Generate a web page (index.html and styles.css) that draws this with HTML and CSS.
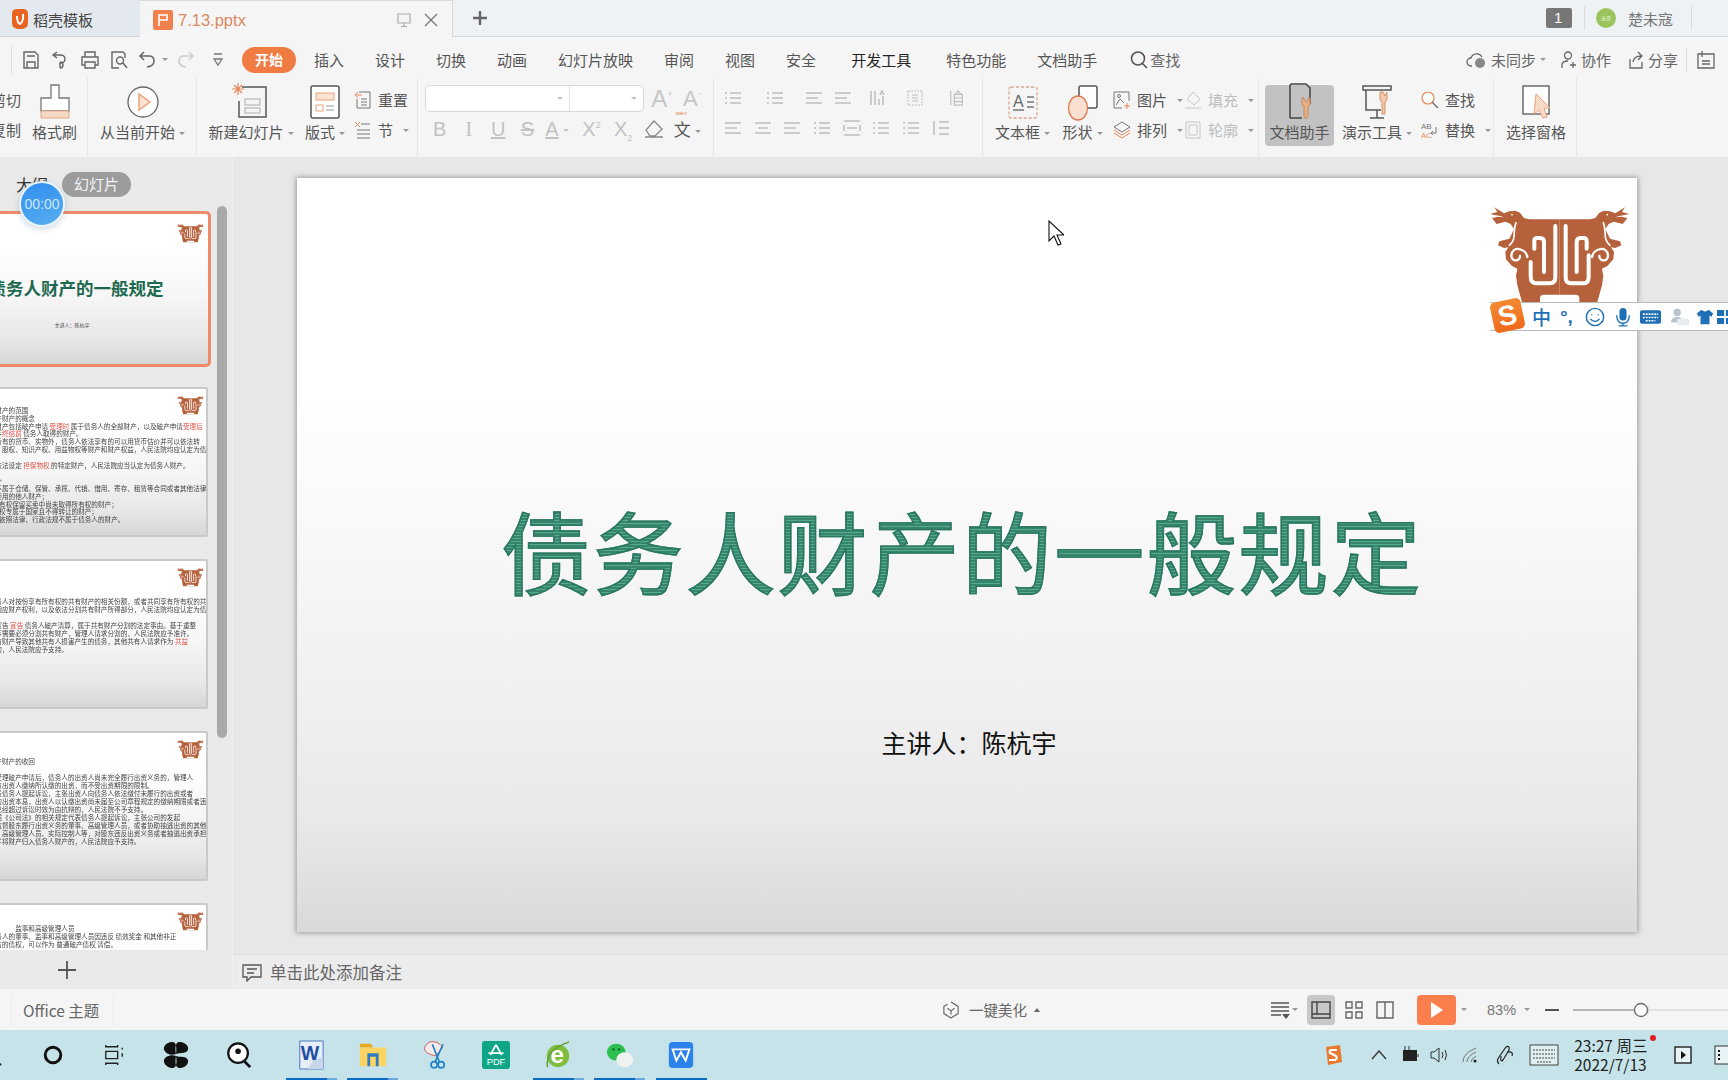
FILE: index.html
```html
<!DOCTYPE html>
<html lang="zh">
<head>
<meta charset="utf-8">
<title>7.13.pptx</title>
<link rel="stylesheet" href="styles.css">
</head>
<body>
<svg class="defs" width="0" height="0">
  <defs>
    <g id="logo">
      <g id="half">
        <path fill="#b5623c" d="M359 92H268L252 88 240 72 226 66 208 68 192 74 163 56 172 70 150 76 180 82 192 86 172 84 156 89 170 106 197 99 212 106 222 122 208 150 178 158 174 170 192 178 205 176 196 190 198 212 216 232 232 240 228 262 232 290 246 340H359Z"/>
        <path fill="none" stroke="#fff" stroke-width="5" stroke-linecap="round" d="M228 102C216 130 232 150 208 170"/>
        <circle cx="216" cy="78" r="2.500" fill="#fff"/>
      </g>
      <use href="#half" transform="matrix(-1 0 0 1 718 0)"/>
      <g fill="none" stroke="#fff" stroke-width="12" stroke-linecap="round" stroke-linejoin="round">
        <path d="M283 180V156Q283 148 292 148H300Q312 148 312 160V250M272 220V264Q272 284 292 284H330Q346 284 346 266V112"/>
        <path d="M377 112V266Q377 284 393 284H430Q446 284 446 264V200M410 250V160Q410 148 422 148H430Q440 148 440 158V180"/>
        <path stroke-width="7" d="M262 205C258 178 216 170 214 200 214 220 240 220 240 202"/>
        <path stroke-width="7" d="M456 205C460 178 502 170 504 200 504 220 478 220 478 202"/>
      </g>
      <path fill="#fff" d="M300 340V328Q300 318 312 318H406Q418 318 418 328V340Z"/>
    </g>
    <g id="para" fill="none" stroke="#bdbdbd" stroke-width="1.5">
      <path d="M1 3H17M1 8H13M1 13H17"/>
    </g>
    <g id="paraC" fill="none" stroke="#bdbdbd" stroke-width="1.5">
      <path d="M1 3H17M4 8H14M1 13H17"/>
    </g>
    <g id="bul" fill="none" stroke="#bdbdbd" stroke-width="1.5">
      <path d="M6 3H17M6 8H17M6 13H17M1 3H3M1 8H3M1 13H3"/>
    </g>
  </defs>
</svg>

<header class="titlebar">
  <div class="tab tab-home">
    <svg class="tab-ic" viewBox="0 0 16 20"><path fill="#e8641f" d="M0 5Q0 0 5 0H11Q16 0 16 5V14Q16 20 8 20 0 20 0 14Z"/><path fill="none" stroke="#fff" stroke-width="2" d="M5 7Q5 14 8 15 12 12 11 5"/></svg>
    <span>稻壳模板</span>
  </div>
  <div class="tab tab-doc">
    <svg class="tab-ic2" viewBox="0 0 20 20"><rect width="20" height="20" rx="2" fill="#f0814e"/><path fill="none" stroke="#fff" stroke-width="1.6" d="M6 16V5H14V10H6"/></svg>
    <span class="doc-name">7.13.pptx</span>
    <svg class="tab-mon" viewBox="0 0 16 16"><path fill="none" stroke="#aaa" stroke-width="1.2" d="M2 2H14V11H2ZM8 11V14M5 14.500H11"/></svg>
    <svg class="tab-x" viewBox="0 0 14 14"><path stroke="#777" stroke-width="1.3" d="M1 1L13 13M13 1L1 13"/></svg>
  </div>
  <svg class="tab-plus" viewBox="0 0 16 16"><path stroke="#666" stroke-width="2.400" d="M8 1V15M1 8H15"/></svg>
  <div class="title-right">
    <span class="count">1</span>
    <i class="vsep"></i>
    <span class="avatar">未登</span>
    <span class="uname">楚未寇</span>
    <i class="vsep"></i>
  </div>
</header>

<nav class="menubar">
  <i class="qa-line"></i>
  <svg class="qa q1" viewBox="0 0 18 18"><path fill="none" stroke="#666" stroke-width="1.400" d="M2 1H13L16 4V17H2ZM5 17V11H13V17M5 5H13"/></svg>
  <svg class="qa q2" viewBox="0 0 18 18"><path fill="none" stroke="#666" stroke-width="1.400" d="M2 4H9Q14 4 14 8T9 12V17M6 1L2 4 6 7M9 17A3 3 0 1 0 9 11"/></svg>
  <svg class="qa q3" viewBox="0 0 18 18"><path fill="none" stroke="#666" stroke-width="1.400" d="M4 6V1H14V6M4 14H1V6H17V14H14M4 11H14V17H4Z"/></svg>
  <svg class="qa q2" viewBox="0 0 18 18"><path fill="none" stroke="#666" stroke-width="1.400" d="M9 17H2V1H13L15 3V7M10 13A3.500 3.500 0 1 0 10 6 3.500 3.500 0 0 0 10 13M13 12L17 17"/></svg>
  <svg class="qa q4" viewBox="0 0 18 18"><path fill="none" stroke="#666" stroke-width="1.500" d="M6 1L2 5 6 9M2 5H11Q16 5 16 10T9 16"/></svg>
  <i class="ar ar-q"></i>
  <svg class="qa q5" viewBox="0 0 18 18"><path fill="none" stroke="#ccc" stroke-width="1.500" d="M12 1L16 5 12 9M16 5H7Q2 5 2 10T9 16"/></svg>
  <svg class="qa q6" viewBox="0 0 18 18"><path fill="none" stroke="#777" stroke-width="1.300" d="M5 3H13M5 8H13L9 14Z"/></svg>
  <span class="pill">开始</span>
  <ul class="nav">
    <li>插入</li><li>设计</li><li>切换</li><li>动画</li><li>幻灯片放映</li><li>审阅</li><li>视图</li><li>安全</li>
    <li class="dark">开发工具</li><li class="far">特色功能</li><li>文档助手</li>
  </ul>
  <svg class="nav-search" viewBox="0 0 18 18"><path fill="none" stroke="#555" stroke-width="1.600" d="M8 14A6.500 6.500 0 1 0 8 1 6.500 6.500 0 0 0 8 14M12 12L17 17"/></svg>
  <span class="nav-find">查找</span>
  <div class="menu-right">
    <svg class="mr-ic" viewBox="0 0 22 18"><path fill="none" stroke="#666" stroke-width="1.300" d="M6 15H5A4 4 0 0 1 5 7 6 6 0 0 1 16 6"/><circle cx="14" cy="12" r="5" fill="#888"/></svg>
    <span class="mr-t">未同步</span><i class="ar"></i>
    <svg class="mr-i2" viewBox="0 0 18 18"><path fill="none" stroke="#666" stroke-width="1.300" d="M8 8A3.500 3.500 0 1 0 8 1 3.500 3.500 0 0 0 8 8M2 17V14Q2 10 8 10M13 11V17M10 14H16"/></svg>
    <span class="mr-t">协作</span>
    <svg class="mr-i3" viewBox="0 0 18 18"><path fill="none" stroke="#666" stroke-width="1.300" d="M3 8V17H15V11M6 11Q7 5 14 5M11 1L15 5 11 9"/></svg>
    <span class="mr-t">分享</span>
    <i class="vsep mr-sep"></i>
    <svg class="mr-i4" viewBox="0 0 18 20"><path fill="none" stroke="#666" stroke-width="1.300" d="M1 4H17V18H1ZM5 1V7M5 11H13M5 14H13"/></svg>
  </div>
</nav>

<section class="ribbon">
  <div class="grp g1">
    <div class="stack cutoff"><span class="lbl">剪切</span><span class="lbl">复制</span></div>
    <div class="big fmt">
      <svg class="big-ic" viewBox="0 0 44 44"><path fill="#fff" stroke="#777" stroke-width="1.300" d="M18 5H26V18H36V31H8V18H18Z"/><path fill="#f6d8c3" stroke="#dba98a" d="M8 31H36V38H8Z"/></svg>
      <span class="lbl">格式刷</span>
    </div>
  </div>
  <div class="grp g2">
    <div class="big">
      <svg class="big-ic" viewBox="0 0 44 44"><circle cx="22" cy="22" r="15" fill="#fff" stroke="#666" stroke-width="1.300"/><path fill="#fbe3d3" stroke="#e9a27d" stroke-width="1.500" d="M18 14L29 22 18 30Z"/></svg>
      <span class="lbl">从当前开始<i class="ar"></i></span>
    </div>
  </div>
  <div class="grp g3">
    <div class="big new">
      <svg class="big-ic" viewBox="0 0 44 44"><path fill="none" stroke="#555" stroke-width="1.500" d="M13 7H37V37H10V21"/><rect x="16" y="19" width="15" height="6" fill="none" stroke="#aaa"/><rect x="16" y="28" width="15" height="5" fill="none" stroke="#aaa"/><path stroke="#e7875a" stroke-width="1.200" d="M5 5L13 13M13 5L5 13M9 3V15M3 9H15"/></svg>
      <span class="lbl">新建幻灯片<i class="ar"></i></span>
    </div>
    <div class="big lay">
      <svg class="big-ic" viewBox="0 0 44 44"><rect x="8" y="6" width="28" height="32" rx="2" fill="#fff" stroke="#555" stroke-width="1.500"/><rect x="13" y="13" width="18" height="7" fill="#fbe3d3" stroke="#e9a27d"/><rect x="13" y="25" width="7" height="6" fill="none" stroke="#e9a27d"/><path stroke="#999" d="M23 26H31M23 30H31"/></svg>
      <span class="lbl">版式<i class="ar"></i></span>
    </div>
    <div class="stack st3">
      <div class="sm"><svg class="sm-ic" viewBox="0 0 18 18"><path fill="none" stroke="#777" d="M5 1H16V17H3V8M7 8H13M7 11H13M7 14H13"/><path fill="none" stroke="#e7875a" d="M1 4H8M4 1L1 4 4 7"/></svg><span class="lbl">重置</span></div>
      <div class="sm"><svg class="sm-ic" viewBox="0 0 18 18"><path fill="none" stroke="#777" d="M7 3H16M3 9H16M3 13H16M3 17H16"/><path stroke="#e7875a" d="M1 1L6 6M6 1L1 6"/></svg><span class="lbl">节</span><i class="ar"></i></div>
    </div>
  </div>
  <div class="grp g4">
    <div class="g4-row1">
      <div class="combo"><span class="cb1"><i class="ar ar-l"></i></span><span class="cb2"><i class="ar ar-l"></i></span></div>
      <span class="fa">A<sup>+</sup></span><span class="fa fa2">A<sup>-</sup></span>
    </div>
    <div class="g4-row2">
      <b class="fx">B</b><i class="fx serif">I</i><u class="fx">U</u><s class="fx">S</s><span class="fx fa-u">A<i class="ar ar-l"></i></span><span class="fx fx-w">X<sup>2</sup></span><span class="fx">X<sub>2</sub></span>
      <svg class="eraser" viewBox="0 0 20 20"><path fill="none" stroke="#888" stroke-width="1.300" d="M10 2L18 10 11 17H6L2 11ZM1 18H19"/></svg>
      <span class="wen"><em>wén</em>文<i class="ar"></i></span>
    </div>
  </div>
  <div class="grp g5">
    <div class="g5-row1">
      <svg class="pic" viewBox="0 0 18 16"><use href="#bul"/></svg>
      <svg class="pic" viewBox="0 0 18 16"><use href="#bul"/></svg>
      <svg class="pic" viewBox="0 0 18 16"><use href="#para"/></svg>
      <svg class="pic" viewBox="0 0 18 16"><use href="#para"/></svg>
      <svg class="pic" viewBox="0 0 18 16"><path fill="none" stroke="#bdbdbd" stroke-width="1.500" d="M2 1V15M6 1V15M14 6V15M10 9V15M11 5L13 1 15 5"/></svg>
      <svg class="pic" viewBox="0 0 18 16"><path fill="none" stroke="#bdbdbd" stroke-dasharray="2 1" d="M2 1H16V15H2Z"/><path stroke="#bdbdbd" d="M6 5H12M6 8H12M6 11H12"/></svg>
      <svg class="pic" viewBox="0 0 18 18"><path fill="none" stroke="#bdbdbd" stroke-width="1.300" d="M2 1V17M6 5H15V17H6ZM6 9H15M6 13H15M8 4L10 1 13 4"/></svg>
    </div>
    <div class="g5-row2">
      <svg class="pic" viewBox="0 0 18 16"><use href="#para"/></svg>
      <svg class="pic" viewBox="0 0 18 16"><use href="#paraC"/></svg>
      <svg class="pic" viewBox="0 0 18 16"><use href="#para"/></svg>
      <svg class="pic" viewBox="0 0 18 16"><use href="#bul"/></svg>
      <svg class="pic" viewBox="0 0 18 16"><path fill="none" stroke="#bdbdbd" stroke-width="1.500" d="M1 1H17M1 15H17M1 5V11M17 5V11M4 8H14"/></svg>
      <svg class="pic" viewBox="0 0 18 16"><use href="#bul"/></svg>
      <svg class="pic" viewBox="0 0 18 16"><use href="#bul"/></svg>
      <svg class="pic" viewBox="0 0 18 16"><path fill="none" stroke="#bdbdbd" stroke-width="1.500" d="M2 1V15M7 2H17M7 8H17M7 14H17"/></svg>
    </div>
  </div>
  <div class="grp g6">
    <div class="big tb">
      <svg class="big-ic" viewBox="0 0 44 44"><rect x="8" y="7" width="28" height="31" rx="2" fill="none" stroke="#d9a78c" stroke-width="1.300" stroke-dasharray="3 2"/><text x="12" y="27" class="svg-a">A</text><path stroke="#777" stroke-width="1.300" d="M12 30H23M26 17H33M26 22H33M26 27H33"/></svg>
      <span class="lbl">文本框<i class="ar"></i></span>
    </div>
    <div class="big sh">
      <svg class="big-ic" viewBox="0 0 44 44"><rect x="18" y="6" width="18" height="22" rx="2" fill="#fff" stroke="#555" stroke-width="1.500"/><ellipse cx="17" cy="28" rx="9.500" ry="12" fill="#f9dfcf" stroke="#d47a52" stroke-width="1.300"/></svg>
      <span class="lbl">形状<i class="ar"></i></span>
    </div>
    <div class="stack st6">
      <div class="sm"><svg class="sm-ic" viewBox="0 0 18 18"><path fill="none" stroke="#777" d="M1 1H16V10M1 1V17H9M3 14L7 8 11 12"/><circle cx="6" cy="5" r="1.500" fill="none" stroke="#777"/><path stroke="#e7875a" d="M14 12V18M11 15H17"/></svg><span class="lbl">图片</span><i class="ar"></i></div>
      <div class="sm"><svg class="sm-ic" viewBox="0 0 18 18"><path fill="none" stroke="#777" d="M9 1L17 6 9 11 1 6Z"/><path fill="none" stroke="#e7875a" d="M1 9L9 14 17 9M1 12L9 17 17 12"/></svg><span class="lbl">排列</span><i class="ar"></i></div>
    </div>
    <div class="stack st6b off">
      <div class="sm"><svg class="sm-ic" viewBox="0 0 18 18"><path fill="none" stroke="#c6c6c6" d="M9 1L16 8 10 14 3 8ZM1 17H17"/></svg><span class="lbl">填充</span><i class="ar"></i></div>
      <div class="sm"><svg class="sm-ic" viewBox="0 0 18 18"><path fill="none" stroke="#c6c6c6" d="M2 1H16V17H2ZM5 4H13V14H5Z"/></svg><span class="lbl">轮廓</span><i class="ar"></i></div>
    </div>
  </div>
  <div class="grp g7">
    <div class="big active">
      <svg class="big-ic" viewBox="0 0 44 44"><path fill="none" stroke="#444" stroke-width="1.500" d="M12 38V6Q12 4 14 4H28L32 8V24M12 38H24"/><path fill="#e9b184" stroke="#c98658" d="M26 20Q30 24 30 20L30 18H32V24Q32 26 30 26V36Q28 41 26 36V26Q24 26 24 24V18H26Z"/></svg>
      <span class="lbl">文档助手</span>
    </div>
    <div class="big pres">
      <svg class="big-ic" viewBox="0 0 44 44"><path fill="none" stroke="#555" stroke-width="1.500" d="M8 6H36V10H8ZM11 10V30H26M22 30V38M15 38H29"/><path fill="#f3c8a9" stroke="#d1916a" d="M28 12L30 16 32 12V20L30 22V34H27V22L25 20V12Z"/></svg>
      <span class="lbl">演示工具<i class="ar"></i></span>
    </div>
    <div class="stack st7">
      <div class="sm"><svg class="sm-ic" viewBox="0 0 18 18"><circle cx="7" cy="7" r="6" fill="#fff" stroke="#e7875a" stroke-width="1.200"/><path stroke="#777" stroke-width="1.500" d="M11 11L17 17"/></svg><span class="lbl">查找</span></div>
      <div class="sm"><svg class="sm-ic" viewBox="0 0 18 18"><text x="0" y="8" class="svg-s">AB</text><text x="0" y="17" class="svg-s2">AC</text><path fill="none" stroke="#777" d="M15 6V12H10M12 10L10 12 12 14"/></svg><span class="lbl">替换</span><i class="ar"></i></div>
    </div>
  </div>
  <div class="grp g8">
    <div class="big">
      <svg class="big-ic" viewBox="0 0 44 44"><rect x="9" y="6" width="26" height="28" fill="#fff" stroke="#555" stroke-width="1.300"/><path fill="#f8dcc9" stroke="#e9a27d" d="M22 14L36 28H30L33 37 29 38 25 30 20 34Z"/></svg>
      <span class="lbl">选择窗格</span>
    </div>
  </div>
</section>

<main class="main">
  <aside class="side">
    <div class="side-head"><span class="side-tab">大纲</span><span class="side-pill">幻灯片</span></div>
    <div class="thumbs">
      <article class="thumb thumb-on">
        <svg class="thumb-logo" viewBox="150 50 420 295"><use href="#logo"/></svg>
        <div class="t-title">债务人财产的一般规定</div>
        <div class="t-sub">主讲人：陈杭宇</div>
      </article>
      <article class="thumb">
        <svg class="thumb-logo" viewBox="150 50 420 295"><use href="#logo"/></svg>
        <div class="tx tx2">
          <p>一、破产财产的范围</p>
          <p>（一）破产财产的概念</p>
          <p>&#12288;&#12288;破产财产包括破产申请 <em>受理时</em> 属于债务人的全部财产，以及破产申请<em>受理后</em></p>
          <p>至破产程序<em>终结前</em> 债务人取得的财产。</p>
          <p>除债务人所有的货币、实物外，债务人依法享有的可以用货币估价并可以依法转</p>
          <p>让的债权、股权、知识产权、用益物权等财产和财产权益，人民法院均应认定为债务人</p>
          <p>&#12288;</p>
          <p>债务人已依法设定 <em>担保物权</em> 的特定财产，人民法院应当认定为债务人财产。</p>
          <p>&#12288;</p>
          <p>（二）例外</p>
          <p>下列财产不属于仓储、保管、承揽、代销、借用、寄存、租赁等合同或者其他法律关</p>
          <p>系占有、使用的他人财产；</p>
          <p>（2）在所有权保留买卖中尚未取得所有权的财产；</p>
          <p>（3）所有权专属于国家且不得转让的财产；</p>
          <p>（4）其他依照法律、行政法规不属于债务人的财产。</p>
        </div>
      </article>
      <article class="thumb">
        <svg class="thumb-logo" viewBox="150 50 420 295"><use href="#logo"/></svg>
        <div class="tx tx3">
          <p>（三）债务人对按份享有所有权的共有财产的相关份额，或者共同享有所有权的共</p>
          <p>有财产的相应财产权利，以及依法分割共有财产所得部分，人民法院均应认定为债</p>
          <p>&#12288;</p>
          <p>人民法院宣告 <em>宣告</em> 债务人破产清算，属于共有财产分割的法定事由。基于重整</p>
          <p>、和解程序需要必须分割共有财产，管理人请求分割的，人民法院应予准许。</p>
          <p>因分割共有财产导致其他共有人损害产生的债务，其他共有人请求作为 <em>共益</em></p>
          <p>债务清偿的，人民法院应予支持。</p>
        </div>
      </article>
      <article class="thumb">
        <svg class="thumb-logo" viewBox="150 50 420 295"><use href="#logo"/></svg>
        <div class="tx tx4">
          <p>（二）破产财产的收回</p>
          <p>&#12288;</p>
          <p>人民法院受理破产申请后，债务人的出资人尚未完全履行出资义务的，管理人</p>
          <p>应当要求该出资人缴纳所认缴的出资，而不受出资期限的限制。</p>
          <p>管理人代表债务人提起诉讼，主张出资人向债务人依法缴付未履行的出资或者</p>
          <p>返还抽逃的出资本息，出资人以认缴出资尚未届至公司章程规定的缴纳期限或者违反</p>
          <p>出资义务已经超过诉讼时效为由抗辩的，人民法院不予支持。</p>
          <p>管理人依据《公司法》的相关规定代表债务人提起诉讼，主张公司的发起</p>
          <p>人和负有监督股东履行出资义务的董事、高级管理人员，或者协助抽逃出资的其他股</p>
          <p>东、董事、高级管理人员、实际控制人等，对股东违反出资义务或者抽逃出资承担相</p>
          <p>应责任，并将财产归入债务人财产的，人民法院应予支持。</p>
        </div>
      </article>
      <article class="thumb">
        <svg class="thumb-logo" viewBox="150 50 420 295"><use href="#logo"/></svg>
        <div class="tx tx5">
          <p>&#12288;&#12288;&#12288;&#12288;&#12288;&#12288;&#12288;监事和高级管理人员</p>
          <p>（三）债务人的董事、监事和高级管理人员因违反 绩效奖金 和其他非正</p>
          <p>常收入侵占的债权，可以作为 普通破产债权 清偿。</p>
        </div>
      </article>
    </div>
    <div class="side-add"><svg class="add-ic" viewBox="0 0 20 20"><path stroke="#555" stroke-width="1.800" d="M10 1V19M1 10H19"/></svg></div>
    <div class="timer">00:00</div>
    <i class="sbar"></i>
  </aside>

  <div class="work">
    <div class="stage">
      <div class="slide">
        <h1 class="s-title">债务人财产的一般规定</h1>
        <p class="s-sub">主讲人：陈杭宇</p>
        <svg class="s-logo" viewBox="150 50 420 295"><use href="#logo"/></svg>
      </div>
    </div>
    <div class="notes">
      <svg class="note-ic" viewBox="0 0 20 20"><path fill="none" stroke="#555" stroke-width="1.300" d="M1 3H19V15H9L5 19V15H1ZM5 7H15M5 11H12"/></svg>
      <span>单击此处添加备注</span>
    </div>
  </div>

  <svg class="cursor" viewBox="0 0 16 26"><path fill="#fff" stroke="#111" stroke-width="1.100" d="M1 1V21L6 16 10 25 13 24 9 15H16Z"/></svg>
  <div class="ime">
    <div class="ime-s">S</div>
    <span class="ime-zh">中</span>
    <span class="ime-dot">°,</span>
    <svg class="ime-ic i-smile" viewBox="0 0 22 22"><circle cx="11" cy="11" r="9.500" fill="none" stroke="#1e6fb5" stroke-width="1.600"/><path fill="none" stroke="#1e6fb5" stroke-width="1.500" d="M6 13Q11 19 16 13M7.500 8V9M14.500 8V9"/></svg>
    <svg class="ime-ic i-mic" viewBox="0 0 18 22"><rect x="5" y="1" width="8" height="14" rx="4" fill="#1e6fb5"/><path fill="none" stroke="#1e6fb5" stroke-width="1.500" d="M2 9Q2 18 9 18T16 9M9 18V21M4 21H14"/></svg>
    <svg class="ime-ic i-kb" viewBox="0 0 22 18"><rect y="2" width="22" height="14" rx="2" fill="#1e6fb5"/><path stroke="#fff" stroke-width="1.600" stroke-dasharray="2 1" d="M3 6H19M3 9.500H19M6 13H16"/></svg>
    <svg class="ime-ic i-p" viewBox="0 0 22 20"><circle cx="9" cy="5" r="4" fill="#b9c3cc"/><path fill="#b9c3cc" d="M2 16Q3 10 9 10T15 16Z"/><rect x="9" y="12" width="13" height="7" fill="#e7ebee"/></svg>
    <svg class="ime-ic i-sh" viewBox="0 0 20 18"><path fill="#1e6fb5" d="M6 1L1 5 3 9 5 7V17H15V7L17 9 19 5 14 1Q10 5 6 1Z"/></svg>
    <svg class="ime-ic i-g" viewBox="0 0 18 18"><path fill="#1e6fb5" d="M0 1H8V8H0ZM0 10H8V17H0ZM10 1H18V8H10ZM10 10H18V17H10Z"/></svg>
  </div>
</main>

<footer class="status">
  <div class="theme">Office 主题</div>
  <svg class="st-beauty" viewBox="0 0 18 20"><path fill="none" stroke="#666" stroke-width="1.300" d="M9 1L17 6V14L9 19 1 14V6L5 3.500M5 8L9 11 13 8M9 11V15"/></svg>
  <span class="st-b-t">一键美化</span><i class="ar-up"></i>
  <svg class="st-list" viewBox="0 0 20 20"><path stroke="#555" stroke-width="1.300" d="M1 3H19M1 7H19M1 11H19M1 15H11"/><path fill="#555" d="M12 14H20L16 19Z"/></svg>
  <i class="ar st-lar"></i>
  <span class="view-on"><svg class="vw" viewBox="0 0 20 20"><path fill="none" stroke="#444" stroke-width="1.400" d="M1 2H19V18H1ZM6 2V14M1 14H19"/></svg></span>
  <svg class="vw v2" viewBox="0 0 20 20"><path fill="none" stroke="#666" stroke-width="1.400" d="M2 2H8V8H2ZM12 2H18V8H12ZM2 12H8V18H2ZM12 12H18V18H12Z"/></svg>
  <svg class="vw v3" viewBox="0 0 20 20"><path fill="none" stroke="#666" stroke-width="1.400" d="M2 2H18V18H2ZM10 2V18"/></svg>
  <span class="play"><svg class="play-ic" viewBox="0 0 14 18"><path fill="#fff" d="M1 1L13 9 1 17Z"/></svg></span>
  <i class="ar st-par"></i>
  <span class="zoom">83%</span><i class="ar st-zar"></i>
  <i class="minus"></i>
  <svg class="slider" viewBox="0 0 156 20"><path stroke="#777" stroke-width="1.200" d="M0 10H61"/><path stroke="#ccc" d="M75 10H156M75 6V14"/><circle cx="68" cy="10" r="6.500" fill="#fff" stroke="#666" stroke-width="1.300"/></svg>
</footer>

<div class="taskbar">
  <div class="tb-cell"><svg class="tk" viewBox="0 0 24 24"><circle cx="12" cy="12" r="8" fill="none" stroke="#222" stroke-width="2"/><path stroke="#222" stroke-width="2" d="M18 18L23 23"/></svg></div>
  <div class="tb-cell"><svg class="tk" viewBox="0 0 24 24"><ellipse cx="12" cy="12" rx="8.500" ry="8.500" fill="none" stroke="#111" stroke-width="3.200"/></svg></div>
  <div class="tb-cell"><svg class="tk" viewBox="0 0 24 24"><path fill="none" stroke="#222" stroke-width="1.500" d="M3 1V3H16V1M3 8H16V16H3ZM3 23V21H16V23M21 4V6M21 10V14"/></svg></div>
  <div class="tb-cell"><svg class="tk tk-l" viewBox="0 0 30 30"><path fill="#111" d="M15 14C10 16 4 14 2 9 2 3 7 1 11 1 15 1 16 6 15 14ZM15 14C20 12 28 14 28 8 28 3 22 1 18 1 14 2 14 8 15 14ZM15 16C10 14 2 16 2 22 3 27 8 29 12 29 16 28 16 22 15 16ZM15 16C20 18 26 15 28 21 28 27 23 29 19 29 14 29 14 22 15 16Z"/></svg></div>
  <div class="tb-cell tb-search"><svg class="tk tk-l" viewBox="0 0 30 30"><circle cx="14" cy="13" r="10.500" fill="#fff" stroke="#111" stroke-width="2.400"/><circle cx="14" cy="11" r="3" fill="#111"/><path stroke="#111" stroke-width="3" d="M21 22L27 28"/></svg></div>
  <div class="tb-cell on tb-word"><svg class="tk tk-l" viewBox="0 0 30 32"><path fill="#e8eef7" stroke="#4472b8" d="M3 1H28V31H3Z"/><path fill="#c8d6ec" d="M17 22L28 18V31H12Z"/><text x="4" y="21" class="svg-w">W</text></svg></div>
  <div class="tb-cell on"><svg class="tk tk-l" viewBox="0 0 30 30"><path fill="#e6a81e" d="M1 3H13L15 7H1Z"/><path fill="#fcd462" d="M1 7H29V27H1Z"/><path fill="#2d7cc4" d="M9 13H21V27H18V17H12V27H9Z"/></svg></div>
  <div class="tb-cell"><svg class="tk tk-l" viewBox="0 0 30 34"><path fill="#f6eaea" stroke="#c74d4d" d="M10 2Q18 1 24 8L16 18Q4 16 3 10 4 4 10 2Z"/><path fill="none" stroke="#1f7fc4" stroke-width="1.800" d="M12 5L20 25M24 5L15 25"/><circle cx="14" cy="28" r="3.500" fill="none" stroke="#1f7fc4" stroke-width="1.800"/><circle cx="22" cy="28" r="3.500" fill="none" stroke="#1f7fc4" stroke-width="1.800"/></svg></div>
  <div class="tb-cell"><svg class="tk tk-l" viewBox="0 0 30 30"><rect width="30" height="30" rx="3" fill="#0fa688"/><path fill="none" stroke="#fff" stroke-width="1.800" d="M15 4L9 15M15 4L21 15M7 13L23 13"/><text x="5" y="26" class="svg-pdf">PDF</text></svg></div>
  <div class="tb-cell on"><svg class="tk tk-l" viewBox="0 0 30 32"><circle cx="15" cy="17" r="12" fill="#7fbd3f"/><text x="7" y="25" class="svg-e">e</text><path fill="none" stroke="#5f9f2e" stroke-width="1.500" d="M4 29Q2 24 6 16T27 2"/></svg></div>
  <div class="tb-cell on"><svg class="tk tk-l" viewBox="0 0 30 30"><ellipse cx="11" cy="12" rx="10" ry="9" fill="#2dbf4e"/><ellipse cx="20" cy="20" rx="9" ry="8" fill="#f0f2ef"/><circle cx="8" cy="9" r="1.300" fill="#0a6a2a"/><circle cx="14" cy="9" r="1.300" fill="#0a6a2a"/></svg></div>
  <div class="tb-cell on on-full"><svg class="tk tk-l" viewBox="0 0 30 30"><rect x="2" y="1" width="26" height="28" rx="4" fill="#2a82ea"/><path fill="none" stroke="#fff" stroke-width="2" d="M6 9H24L20 21 15 12 10 21Z"/></svg></div>
  <div class="tray">
    <svg class="tr-s" viewBox="0 0 18 20"><path fill="#e8792f" d="M2 2L16 0 18 17 4 20Z"/><path fill="none" stroke="#fff" stroke-width="2.200" d="M13 5H7Q5 5 6 8L12 11Q14 13 11 15H5"/></svg>
    <svg class="tr-up" viewBox="0 0 16 10"><path fill="none" stroke="#333" stroke-width="1.300" d="M1 9L8 1 15 9"/></svg>
    <svg class="tr-i m13" viewBox="0 0 20 20"><rect x="3" y="5" width="14" height="11" fill="#222"/><path stroke="#333" d="M18 9V12M5 1V5M9 1V5"/></svg>
    <svg class="tr-i m9" viewBox="0 0 20 20"><path fill="none" stroke="#333" d="M2 7H5L10 3V17L5 13H2ZM13 7Q15 10 13 13M16 5Q19 10 16 15"/></svg>
    <svg class="tr-i m11" viewBox="0 0 20 20"><path fill="none" stroke="#777" d="M3 17Q3 8 16 3M7 17Q7 11 16 7M11 17Q11 14 16 11"/><circle cx="15" cy="16" r="1.500" fill="#222"/></svg>
    <svg class="tr-i m15" viewBox="0 0 20 20"><path fill="none" stroke="#222" stroke-width="1.200" d="M4 19Q1 16 4 12L11 2Q15 0 14 5L8 15Q5 18 6 11M12 7Q19 6 17 11"/></svg>
    <svg class="tr-kb m14" viewBox="0 0 30 22"><rect x="1" y="1" width="28" height="20" fill="#dff0f3" stroke="#444"/><path stroke="#444" stroke-dasharray="2 1" d="M4 6H26M4 10H26M4 14H26M8 18H22"/></svg>
    <div class="clock"><span>23:27 周三</span><span>2022/7/13</span><i class="reddot"></i></div>
    <svg class="tr-i m19" viewBox="0 0 20 20"><rect x="2" y="2" width="16" height="16" fill="#e8f3f5" stroke="#222" stroke-width="1.400"/><path fill="#111" d="M8 6L13 10 8 14Z"/></svg>
    <svg class="tr-i m21" viewBox="0 0 20 20"><rect x="1" y="1" width="18" height="18" fill="#e8f3f5" stroke="#333"/><path stroke="#111" stroke-width="2" stroke-dasharray="2 2" d="M5 5V15"/></svg>
  </div>
</div>
</body>
</html>
```
FILE: styles.css
```css
* { box-sizing: border-box; }
html, body { margin: 0; padding: 0; }
body {
  width: 1728px; height: 1080px; overflow: hidden;
  display: flex; flex-direction: column;
  font-family: "Noto Sans CJK SC", "Noto Sans", sans-serif;
  font-size: 15px; color: #555; background: #f5f5f5;
  position: relative;
}
.defs { position: absolute; }
i { font-style: normal; }
.svg-a { font: 400 16px "Liberation Sans", sans-serif; fill: #666; }
.svg-s { font: 400 8px "Liberation Sans", sans-serif; fill: #777; }
.svg-s2 { font: 400 8px "Liberation Sans", sans-serif; fill: #e7875a; }
.svg-w { font: 700 21px "Liberation Sans", sans-serif; fill: #1d4fa3; }
.svg-pdf { font: 400 10px "Liberation Sans", sans-serif; fill: #fff; }
.svg-e { font: 700 26px "Liberation Sans", sans-serif; fill: #fff; }

/* title bar */
.titlebar { height: 37px; flex: none; display: flex; align-items: stretch; background: #eff2f5; border-bottom: 1px solid #d4d6d8; }
.tab { display: flex; align-items: center; flex: none; height: 37px; padding-top: 2px; }
.tab-home { width: 140px; padding-left: 12px; background: #e3e9ef; color: #444; border-bottom: 1px solid #d4d6d8; }
.tab-ic { width: 16px; height: 20px; margin-right: 5px; }
.tab-doc { width: 313px; padding-left: 13px; background: #f5f5f5; border: 1px solid #d8dadc; border-width: 1px 1px 0 0; }
.tab-ic2 { width: 20px; height: 20px; margin-right: 5px; }
.doc-name { width: 220px; color: #d98a5f; font-family: "Liberation Sans", sans-serif; font-size: 16.500px; }
.tab-mon { width: 16px; height: 16px; margin-left: -2px; }
.tab-x { width: 14px; height: 14px; margin-left: 12px; }
.tab-plus { width: 16px; height: 16px; margin: 10px 0 0 19px; }
.title-right { margin-left: auto; display: flex; align-items: center; padding-right: 36px; }
.count { width: 26px; height: 20px; background: #777; color: #fff; border-radius: 2px; font: 15px/20px "Liberation Sans", sans-serif; padding-left: 8px; }
.vsep { width: 1px; height: 24px; background: #dcdcdc; display: block; }
.count + .vsep { margin-left: 12px; }
.avatar { width: 20px; height: 20px; border-radius: 50%; background: #9bc45f; color: #e8f3d8; font-size: 5px; line-height: 20px; text-align: center; margin-left: 11px; }
.uname { font-size: 15px; color: #777; margin: 0 18px 0 12px; }

/* menu */
.menubar { height: 41px; flex: none; display: flex; align-items: center; background: #f5f5f5; padding-top: 4px; }
.qa-line { width: 1px; height: 30px; background: #ddd; margin-left: 11px; display: block; }
.qa { width: 18px; height: 18px; flex: none; }
.q1 { margin-left: 10px; } .q2 { margin-left: 11px; } .q3 { margin-left: 12px; } .q4 { margin-left: 10px; }
.q5 { margin-left: 9px; } .q6 { margin-left: 14px; }
.ar { display: inline-block; width: 0; height: 0; border: 3px solid transparent; border-top: 3.500px solid #999; border-bottom: 0; vertical-align: middle; margin-left: 4px; flex: none; }
.ar-q { margin-left: 6px; }
.pill { width: 54px; height: 26px; margin-left: 15px; background: #f07c44; color: #fff; border-radius: 13px; text-align: center; line-height: 25px; font-weight: 700; font-size: 14px; flex: none; }
.nav { display: flex; gap: 31px; list-style: none; margin: 0 0 0 18px; padding: 0; color: #555; }
.nav .dark { color: #222; margin-left: 4px; }
.nav .far { margin-left: 4px; }
.nav-search { width: 18px; height: 18px; margin-left: 33px; flex: none; }
.nav-find { margin-left: 2px; color: #666; }
.menu-right { margin-left: auto; display: flex; align-items: center; padding-right: 13px; }
.mr-ic { width: 22px; height: 18px; }
.mr-t { font-size: 15px; color: #666; margin-left: 3px; }
.mr-i2 { width: 18px; height: 18px; margin-left: 14px; }
.mr-i3 { width: 18px; height: 18px; margin-left: 16px; }
.mr-sep { margin-left: 8px; }
.mr-i4 { width: 18px; height: 20px; margin-left: 10px; }

/* ribbon */
.ribbon { height: 79px; flex: none; display: flex; background: #f5f5f5; box-shadow: 0 1px 0 #e2e2e2; position: relative; }
.grp { flex: none; display: flex; align-items: flex-start; height: 79px; border-right: 1px solid #e6e6e6; }
.g1 { width: 88px; } .g2 { width: 109px; padding-left: 12px; } .g3 { width: 221px; padding-left: 9px; }
.g4 { width: 296px; padding-left: 7px; display: block; }
.g5 { width: 269px; display: block; }
.g6 { width: 276px; padding-left: 10px; }
.g7 { width: 235px; padding-left: 6px; }
.g8 { width: 83px; padding-left: 12px; }
.lbl { font-size: 15px; line-height: 20px; color: #555; white-space: nowrap; }
.big { display: flex; flex-direction: column; align-items: center; padding-top: 2px; flex: none; }
.big .lbl { margin-top: -2px; }
.big-ic { width: 44px; height: 44px; display: block; }
.stack { display: flex; flex-direction: column; gap: 10px; padding-top: 12px; flex: none; }
.cutoff { margin-left: -9px; }
.fmt { margin-left: 11px; }
.new { width: 90px; }
.lay { width: 44px; margin-left: 7px; }
.sm { display: flex; align-items: center; gap: 6px; height: 20px; }
.sm-ic { width: 18px; height: 18px; flex: none; margin-left: -1px; }
.st3 { margin-left: 8px; }
.tb { width: 59px; }
.sh { width: 45px; margin-left: 8px; }
.st6 { margin-left: 9px; width: 71px; }
.st6b .lbl { color: #bdbdbd; }
.active { width: 69px; height: 61px; margin-top: 7px; padding-top: 0; background: #c2c2c2; border-radius: 4px; justify-content: flex-start; }
.active .big-ic { margin-top: -5px; }
.pres { width: 72px; margin-left: 7px; }
.st7 { margin-left: 9px; }
.g4-row1 { display: flex; align-items: center; margin-top: 7px; }
.combo { width: 220px; height: 27px; background: #fff; border: 1px solid #d8d8d8; border-radius: 5px; display: flex; }
.cb1 { width: 144px; border-right: 1px solid #e2e2e2; text-align: right; padding-right: 6px; line-height: 22px; }
.cb2 { flex: 1; text-align: right; padding-right: 6px; line-height: 22px; }
.ar-l { border-top-color: #c4c4c4; }
.fa { font: 24px/27px "Liberation Sans", sans-serif; color: #c6c6c6; width: 30px; margin-left: 7px; }
.fa2 { margin-left: 2px; font-size: 22px; }
.fa sup { font-size: 9px; vertical-align: 10px; line-height: 0; }
.g4-row2 { display: flex; align-items: center; margin-top: 4px; height: 26px; }
.fx { width: 29.300px; text-align: center; flex: none; font: 20px/26px "Liberation Sans", sans-serif; color: #c2c2c2; }
.fx sup, .fx sub { font-size: 9px; line-height: 0; }
.serif { font-family: "Liberation Serif", serif; }
.fa-u { text-decoration: underline; text-decoration-thickness: 2px; }
.fx-w { width: 34px; margin-left: 3px; }
.eraser { width: 20px; height: 20px; margin-left: 6px; flex: none; }
.wen { margin-left: 10px; position: relative; font-size: 17px; color: #555; line-height: 26px; white-space: nowrap; }
.wen em { position: absolute; top: -6px; left: 2px; font: 6px "Liberation Sans", sans-serif; color: #e7875a; }
.g5-row1 { display: grid; grid-template-columns: 38px 46px 32px 26px 44px 30px 54px; margin-top: 12px; justify-items: center; }
.g5-row2 { display: grid; grid-template-columns: repeat(8, 29.700px); margin: 14px 0 0 4px; justify-items: center; }
.pic { width: 18px; height: 16px; display: block; }

/* main */
.main { flex: 1; min-height: 0; display: flex; background: #e7e7e7; position: relative; }
.side { width: 233px; flex: none; background: #e9e9e9; border-right: 1px solid #f0f0f0; position: relative; display: flex; flex-direction: column; }
.side-head { height: 54px; flex: none; display: flex; align-items: flex-start; padding: 15px 0 0 16px; }
.side-tab { font-size: 16px; color: #333; width: 46px; line-height: 25px; }
.side-pill { width: 69px; height: 25px; border-radius: 13px; background: #9c9c9c; color: #f4f4f4; font-size: 15px; line-height: 24px; text-align: center; }
.timer { position: absolute; left: 19px; top: 24px; width: 46px; height: 46px; border-radius: 50%; background: linear-gradient(160deg, #2f8ef0, #58aeee); border: 2px solid #e6f3fb; color: #cfe6fa; font: 14px/42px "Liberation Sans", sans-serif; text-align: center; box-shadow: 0 2px 6px rgba(90,120,150,.3); }
.sbar { position: absolute; left: 217px; top: 49px; width: 10px; height: 532px; background: #a9a9a9; border-radius: 5px; }
.thumbs { flex: 1; min-height: 0; overflow: hidden; display: flex; flex-direction: column; gap: 22px; }
.thumb { flex: none; width: 267px; height: 150px; margin-left: -59px; position: relative; border: 2px solid #c9c9c9; border-radius: 2px; background: linear-gradient(#fff 20%, #f6f6f6 55%, #e6e6e6 85%, #d6d6d6); overflow: hidden; }
.thumb-on { height: 156px; width: 270px; border: 3px solid #ef8a68; border-radius: 5px; margin-bottom: -2px; }
.thumb-logo { position: absolute; right: 2px; top: 6px; width: 27px; height: 20px; }
.thumb-on .thumb-logo { top: 9px; right: 4px; }
.t-title { position: absolute; left: 0; right: 0; top: 61px; text-align: center; color: #1e6a50; font-size: 17.500px; font-weight: 700; line-height: 26px; white-space: nowrap; }
.t-sub { position: absolute; left: 0; right: 8px; top: 107px; text-align: center; font-size: 5px; line-height: 8px; color: #444; }
.tx { position: absolute; left: 26px; font-size: 6.600px; line-height: 7.800px; color: #444; white-space: nowrap; filter: blur(.25px); }
.tx p { margin: 0; }
.tx em { font-style: normal; color: #e0524a; }
.tx2 { top: 18px; } .tx3 { top: 36px; line-height: 8px; } .tx4 { top: 24px; line-height: 8px; } .tx5 { top: 19px; line-height: 8px; }
.side-add { height: 39px; flex: none; display: flex; align-items: center; justify-content: center; padding-right: 99px; }
.add-ic { width: 20px; height: 20px; }

/* work */
.work { flex: 1; min-width: 0; display: flex; flex-direction: column; }
.stage { flex: 1; min-height: 0; padding: 21px 0 0 64px; background: #e7e7e7; }
.slide { width: 1340px; height: 754px; position: relative; background: linear-gradient(#fff 0, #fff 28%, #f5f5f5 55%, #e9e9e9 85%, #d9d9d9 100%); box-shadow: 0 0 5px 1px rgba(90,90,90,.55); display: flex; flex-direction: column; align-items: center; }
.s-title { margin: 0; position: relative; top: 318px; left: -5px; font-size: 90px; line-height: 106px; font-weight: 400; letter-spacing: 2.200px; white-space: nowrap; color: transparent; background: repeating-linear-gradient(0deg, #55ab8e 0 1px, #37856d 1px 3px); -webkit-background-clip: text; background-clip: text; -webkit-text-stroke: 1.500px #2c7760; }
.s-sub { margin: 0; position: relative; top: 441px; font-size: 25px; line-height: 34px; color: #111; left: 2px; }
.s-logo { position: absolute; right: 7px; top: 27px; width: 140px; height: 99px; }
.notes { height: 35px; flex: none; display: flex; align-items: center; gap: 8px; padding-left: 9px; background: #ececec; color: #666; font-size: 16.500px; border-top: 1px solid #e2e2e2; }
.note-ic { width: 20px; height: 20px; }
.cursor { position: absolute; left: 1048px; top: 63px; width: 16px; height: 26px; }
.ime { position: absolute; left: 1490px; top: 145px; width: 238px; height: 29px; background: rgba(255,255,255,.96); border: 1px solid #b8bcc0; border-right: 0; border-left: 0; display: flex; align-items: center; }
.ime-s { position: absolute; left: 2px; top: -3px; width: 31px; height: 31px; border-radius: 5px; background: linear-gradient(#f38a33, #ef6a1c); color: #fff; font: 700 28px/31px "Liberation Sans", sans-serif; text-align: center; transform: rotate(-12deg); }
.ime-zh { margin-left: 42px; font-size: 19px; font-weight: 500; color: #1e6fb5; line-height: 26px; }
.ime-dot { margin-left: 9px; font: 700 19px/20px "Liberation Sans", sans-serif; color: #1e6fb5; width: 20px; }
.ime-ic { flex: none; height: 20px; }
.i-smile { width: 22px; margin-left: 11px; }
.i-mic { width: 16px; margin-left: 9px; }
.i-kb { width: 21px; margin-left: 9px; }
.i-p { width: 20px; margin-left: 8px; }
.i-sh { width: 18px; margin-left: 7px; }
.i-g { width: 16px; margin-left: 3px; }

/* status */
.status { height: 41px; flex: none; display: flex; align-items: center; background: #f5f5f5; }
.theme { margin-left: 11px; width: 103px; height: 32px; padding-left: 11px; border: 1px solid #ebebeb; border-width: 0 1px; line-height: 32px; color: #666; font-size: 15.500px; flex: none; }
.st-beauty { width: 16px; height: 18px; margin-left: 829px; flex: none; }
.st-b-t { margin-left: 10px; font-size: 14.500px; color: #666; width: 60px; flex: none; }
.ar-up { width: 0; height: 0; border: 3px solid transparent; border-bottom: 4px solid #666; border-top: 0; margin-left: 5px; }
.st-list { width: 20px; height: 20px; margin-left: 230px; flex: none; }
.st-lar { margin-left: 2px; }
.view-on { width: 28px; height: 30px; margin-left: 9px; background: #c8c8c8; border-radius: 4px; display: flex; align-items: center; justify-content: center; flex: none; }
.vw { width: 20px; height: 20px; flex: none; }
.v2 { margin-left: 9px; } .v3 { margin-left: 11px; }
.play { width: 39px; height: 30px; margin-left: 22px; background: #fa7f4d; border-radius: 4px; display: flex; align-items: center; justify-content: center; flex: none; }
.play-ic { width: 14px; height: 18px; }
.st-par { margin-left: 5px; }
.zoom { margin-left: 20px; font: 14.500px "Liberation Sans", sans-serif; color: #777; width: 31px; flex: none; }
.st-zar { margin-left: 6px; }
.minus { width: 14px; height: 2px; background: #555; margin-left: 15px; flex: none; }
.slider { width: 156px; height: 20px; margin-left: 14px; flex: none; }

/* taskbar */
.taskbar { height: 50px; flex: none; display: flex; align-items: stretch; background: #c5e3e8; margin-left: -40px; width: 1768px; }
.tb-cell { width: 61.700px; flex: none; display: flex; align-items: center; justify-content: center; }
.tb-cell.on { background: linear-gradient(90deg, #0d6cc4 80%, #6ba8e0 80%) center bottom / 51px 2px no-repeat; }
.tb-cell.on-full { background-image: linear-gradient(#0d6cc4, #0d6cc4); }
.tb-search { padding-left: 3px; }
.tb-word { margin-left: 12px; }
.tk { width: 22px; height: 22px; }
.tk-l { width: 28px; height: 30px; }
.tray { display: flex; align-items: center; margin-left: 612px; flex: none; }
.tr-s { width: 18px; height: 20px; flex: none; }
.tr-up { width: 16px; height: 10px; margin-left: 29px; flex: none; }
.tr-i { width: 20px; height: 20px; flex: none; }
.tr-kb { width: 30px; height: 22px; flex: none; }
.m9 { margin-left: 9px; } .m11 { margin-left: 11px; } .m13 { margin-left: 13px; } .m14 { margin-left: 14px; } .m15 { margin-left: 15px; } .m19 { margin-left: 19px; } .m21 { margin-left: 21px; }
.clock { width: 80px; margin-left: 15px; display: flex; flex-direction: column; color: #222; font-size: 15.500px; line-height: 19px; position: relative; white-space: nowrap; flex: none; }
.reddot { position: absolute; left: 76px; top: -1px; width: 6px; height: 6px; border-radius: 50%; background: #e02020; }
```
